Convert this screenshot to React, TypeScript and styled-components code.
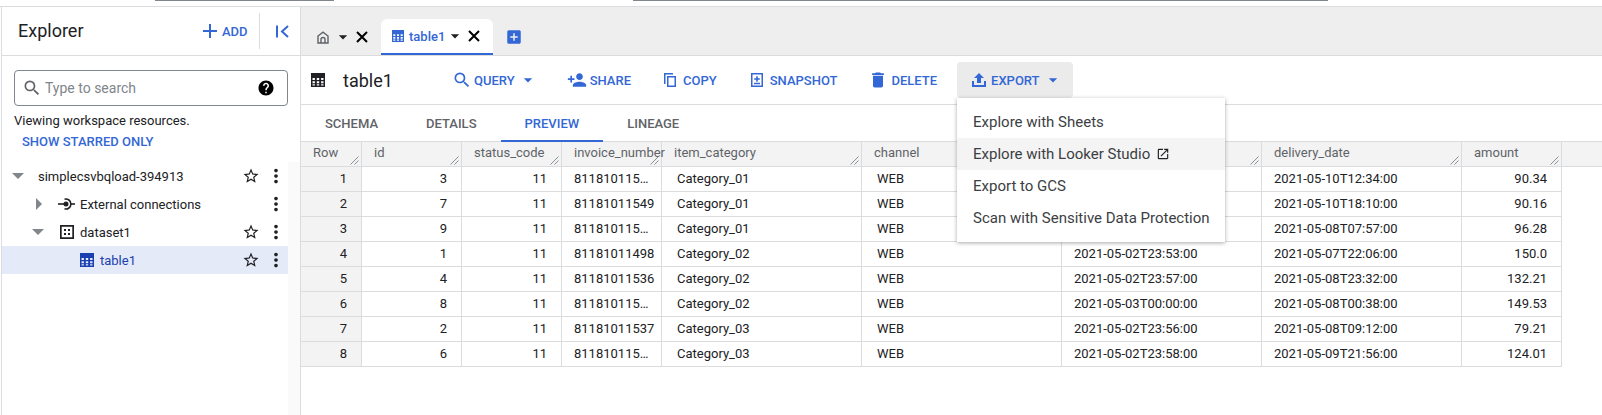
import styled, { createGlobalStyle } from 'styled-components';
import {
  MdAdd,
  MdAddBox,
  MdArrowDropDown,
  MdDelete,
  MdHelp,
  MdMoreVert,
  MdOpenInNew,
  MdPersonAdd,
  MdSearch,
  MdStarBorder,
} from 'react-icons/md';

const BLUE = '#3367d6';
const LINE = '#dadce0';

const GlobalStyle = createGlobalStyle`
  html, body {
    margin: 0;
    height: 100%;
    overflow: hidden;
    background: #fff;
  }
  body {
    font-family: Roboto, "Liberation Sans", sans-serif;
    color: #202124;
  }
  * {
    box-sizing: border-box;
  }
  svg {
    flex: none;
  }
`;

const columns = [
  { name: 'Row', width: 61, right: true },
  { name: 'id', width: 100, right: true },
  { name: 'status_code', width: 100, right: true },
  { name: 'invoice_number', width: 100, right: false },
  { name: 'item_category', width: 200, right: false },
  { name: 'channel', width: 200, right: false },
  { name: '', width: 200, right: false }, // covered by the export menu
  { name: 'delivery_date', width: 200, right: false },
  { name: 'amount', width: 100, right: true },
];

const rows = [
  ['1', '3', '11', '811810115…', 'Category_01', 'WEB', '', '2021-05-10T12:34:00', '90.34'],
  ['2', '7', '11', '81181011549', 'Category_01', 'WEB', '', '2021-05-10T18:10:00', '90.16'],
  ['3', '9', '11', '811810115…', 'Category_01', 'WEB', '', '2021-05-08T07:57:00', '96.28'],
  ['4', '1', '11', '81181011498', 'Category_02', 'WEB', '2021-05-02T23:53:00', '2021-05-07T22:06:00', '150.0'],
  ['5', '4', '11', '81181011536', 'Category_02', 'WEB', '2021-05-02T23:57:00', '2021-05-08T23:32:00', '132.21'],
  ['6', '8', '11', '811810115…', 'Category_02', 'WEB', '2021-05-03T00:00:00', '2021-05-08T00:38:00', '149.53'],
  ['7', '2', '11', '81181011537', 'Category_03', 'WEB', '2021-05-02T23:56:00', '2021-05-08T09:12:00', '79.21'],
  ['8', '6', '11', '811810115…', 'Category_03', 'WEB', '2021-05-02T23:58:00', '2021-05-09T21:56:00', '124.01'],
];

const TableIcon = ({ size = 14, color = 'currentColor' }: { size?: number; color?: string }) => (
  <svg width={size} height={size} viewBox="0 0 14 14" fill={color}>
    <path
      fillRule="evenodd"
      d="M0 0h14v14H0zM1.5 5v2h2.4V5zm4.3 0v2h2.4V5zm4.3 0v2h2.4V5zM1.5 8.2v2h2.4v-2zm4.3 0v2h2.4v-2zm4.3 0v2h2.4v-2zM1.5 11.2v1.4h2.4v-1.4zm4.3 0v1.4h2.4v-1.4zm4.3 0v1.4h2.4v-1.4z"
    />
  </svg>
);

const HomeIcon = () => (
  <svg width="12" height="13" viewBox="0 0 12 13" fill="none" stroke="#5f6368" strokeWidth="1.4">
    <path d="M1 12V5l5-3.8L11 5v7z" />
    <path d="M4 12V8.500a2 2 0 0 1 4 0V12" />
  </svg>
);

const CloseIcon = () => (
  <svg width="18" height="18" viewBox="0 0 18 18" fill="none" stroke="#000" strokeWidth="2">
    <path d="M4 4l10 10M14 4L4 14" />
  </svg>
);

const CollapseIcon = () => (
  <svg width="13" height="13" viewBox="0 0 13 13" fill="none" stroke={BLUE} strokeWidth="2">
    <path d="M1 0.500v12" />
    <path d="M12 1L6 6.500 12 12" />
  </svg>
);

const CopyIcon = () => (
  <svg width="12" height="14" viewBox="0 0 12 14" fill={BLUE}>
    <path d="M0 0h9v1.500H1.500V11H0z" />
    <path fillRule="evenodd" d="M3 3h9v11H3zM4.500 4.500v8h6v-8z" />
  </svg>
);

const SnapshotIcon = () => (
  <svg width="12" height="14" viewBox="0 0 12 14" fill={BLUE}>
    <path
      fillRule="evenodd"
      d="M0 0h12v14H0zM1.500 1.500v11h9v-11zM5.200 3.200h1.600v2h2v1.500h-2v2H5.200v-2h-2V5.200h2zM3 9.800h6v1.400H3z"
    />
  </svg>
);

const ExportIcon = () => (
  <svg width="14" height="14" viewBox="0 0 14 14" fill={BLUE}>
    <path d="M7 0l5 5H9v5H5V5H2z" />
    <path d="M0 8h2v4h10V8h2v6H0z" />
  </svg>
);

const ConnectionIcon = () => (
  <svg width="17" height="14" viewBox="0 0 17 14" fill="none" stroke="#202124" strokeWidth="1.600">
    <path d="M0 7h6" />
    <path d="M6.500 2.200a5 5 0 1 1 0 9.600" />
    <path d="M12.500 7H17" />
    <circle cx="8" cy="7" r="1.700" fill="#202124" />
  </svg>
);

const DatasetIcon = () => (
  <svg width="14" height="14" viewBox="0 0 14 14" fill="#202124">
    <path
      fillRule="evenodd"
      d="M0 0h14v14H0zM1.700 1.700v10.600h10.600V1.700zM4 4h2v2H4zM8 4h2v2H8zM4 8h2v2H4zM8 8h2v2H8z"
    />
  </svg>
);

const ResizeHandle = () => (
  <HandleBox width="9" height="9" viewBox="0 0 9 9" stroke="#80868b" strokeWidth="0.9">
    <path d="M0.500 8.500L8.500 0.500" />
    <path d="M4.500 8.500L8.500 4.500" />
  </HandleBox>
);

const StarAndMenu = ({ star = true }: { star?: boolean }) => (
  <RowActions>
    {star && <MdStarBorder size={18} color="#202124" />}
    <MdMoreVert size={22} color="#202124" />
  </RowActions>
);

export default function App() {
  return (
    <>
      <GlobalStyle />
      <TopStrip>
        <TopBar $left={155} $width={179} />
        <TopBar $left={299} $width={695} />
      </TopStrip>
      <Page>
        <Sidebar>
          <SidebarHeader>
            <SidebarTitle>Explorer</SidebarTitle>
            <AddButton>
              <MdAdd size={24} />
              ADD
            </AddButton>
            <HeaderDivider />
            <CollapseButton>
              <CollapseIcon />
            </CollapseButton>
          </SidebarHeader>
          <SearchBox>
            <MdSearch size={20} color="#5f6368" />
            <SearchText>Type to search</SearchText>
            <MdHelp size={18} color="#000" />
          </SearchBox>
          <ViewingNote>Viewing workspace resources.</ViewingNote>
          <StarredLink>SHOW STARRED ONLY</StarredLink>
          <TreeArea>
            <Tree>
              <TreeRow $indent={6}>
                <Arrow $open />
                <TreeLabel $left={14}>simplecsvbqload-394913</TreeLabel>
                <StarAndMenu />
              </TreeRow>
              <TreeRow $indent={28}>
                <Arrow />
                <TreeIcon $left={16}>
                  <ConnectionIcon />
                </TreeIcon>
                <TreeLabel $left={5}>External connections</TreeLabel>
                <StarAndMenu star={false} />
              </TreeRow>
              <TreeRow $indent={26}>
                <Arrow $open />
                <TreeIcon $left={16}>
                  <DatasetIcon />
                </TreeIcon>
                <TreeLabel $left={6}>dataset1</TreeLabel>
                <StarAndMenu />
              </TreeRow>
              <TreeRow $indent={78} $selected>
                <TreeIcon $left={0}>
                  <TableIcon color="#1a3fb0" />
                </TreeIcon>
                <TreeLabel $left={6} $selected>
                  table1
                </TreeLabel>
                <StarAndMenu />
              </TreeRow>
            </Tree>
            <ScrollTrack />
          </TreeArea>
        </Sidebar>
        <Main>
          <TabStrip>
            <HomeTab>
              <HomeIcon />
              <TabCaret $left={4}>
                <MdArrowDropDown size={20} color="#202124" />
              </TabCaret>
              <CloseIcon />
            </HomeTab>
            <ActiveTab>
              <TableIcon size={12} color={BLUE} />
              <ActiveTabLabel>table1</ActiveTabLabel>
              <TabCaret $left={0}>
                <MdArrowDropDown size={20} color="#202124" />
              </TabCaret>
              <CloseIcon />
            </ActiveTab>
            <NewTab>
              <MdAddBox size={18} color={BLUE} />
            </NewTab>
          </TabStrip>
          <Toolbar>
            <TableIcon color="#202124" />
            <TableTitle>table1</TableTitle>
            <ToolButton>
              <IconSlot $width={14}>
                <MdSearch size={20} />
              </IconSlot>
              QUERY
              <ButtonCaret>
                <MdArrowDropDown size={20} />
              </ButtonCaret>
            </ToolButton>
            <ToolButton $after={1}>
              <IconSlot $width={16}>
                <MdPersonAdd size={20} />
              </IconSlot>
              SHARE
            </ToolButton>
            <ToolButton $after={2}>
              <IconSlot $width={12} $gap={7}>
                <CopyIcon />
              </IconSlot>
              COPY
            </ToolButton>
            <ToolButton>
              <IconSlot $width={12} $gap={7}>
                <SnapshotIcon />
              </IconSlot>
              SNAPSHOT
            </ToolButton>
            <ToolButton>
              <IconSlot $width={12} $gap={7}>
                <MdDelete size={20} />
              </IconSlot>
              DELETE
            </ToolButton>
            <ExportWrap>
              <ToolButton $active $after={0}>
                <IconSlot $width={14}>
                  <ExportIcon />
                </IconSlot>
                EXPORT
                <ButtonCaret>
                  <MdArrowDropDown size={20} />
                </ButtonCaret>
              </ToolButton>
              <ExportMenu>
                <MenuItem>Explore with Sheets</MenuItem>
                <MenuItem $hover>
                  Explore with Looker Studio
                  <MdOpenInNew size={14} color="#202124" />
                </MenuItem>
                <MenuItem>Export to GCS</MenuItem>
                <MenuItem>Scan with Sensitive Data Protection</MenuItem>
              </ExportMenu>
            </ExportWrap>
          </Toolbar>
          <ResultTabs>
            <ResultTab>SCHEMA</ResultTab>
            <ResultTab>DETAILS</ResultTab>
            <ResultTab $active>PREVIEW</ResultTab>
            <ResultTab>LINEAGE</ResultTab>
          </ResultTabs>
          <HeaderRow>
            {columns.map((col) => (
              <HeaderCell key={col.name || 'covered'} $width={col.width}>
                {col.name}
                <ResizeHandle />
              </HeaderCell>
            ))}
          </HeaderRow>
          {rows.map((row) => (
            <DataRow key={row[0]}>
              {row.map((value, i) => (
                <DataCell
                  key={i}
                  $width={columns[i].width}
                  $right={columns[i].right}
                  $rowHead={i === 0}
                  $tight={i === 3 || i > 5}
                >
                  {value}
                </DataCell>
              ))}
            </DataRow>
          ))}
        </Main>
      </Page>
    </>
  );
}

const TopStrip = styled.div`
  display: flex;
  align-items: flex-start;
  height: 7px;
  border-bottom: 1px solid ${LINE};
`;

const TopBar = styled.div<{ $left: number; $width: number }>`
  margin-left: ${(p) => p.$left}px;
  width: ${(p) => p.$width}px;
  height: 1px;
  background: #80868b;
`;

const Page = styled.div`
  display: flex;
  height: 408px;
`;

const Sidebar = styled.aside`
  display: flex;
  flex-direction: column;
  flex: none;
  width: 300px;
  margin-left: 1px;
  border-left: 1px solid ${LINE};
  border-right: 1px solid ${LINE};
`;

const SidebarHeader = styled.div`
  display: flex;
  align-items: center;
  flex: none;
  height: 49px;
  padding-left: 16px;
  border-bottom: 1px solid ${LINE};
`;

const SidebarTitle = styled.div`
  width: 180px;
  padding-bottom: 2px;
  font-size: 18px;
  color: #202124;
`;

const AddButton = styled.div`
  display: flex;
  align-items: center;
  width: 61px;
  font-size: 13px;
  font-weight: 500;
  color: ${BLUE};
`;

const HeaderDivider = styled.div`
  width: 1px;
  height: 36px;
  background: ${LINE};
`;

const CollapseButton = styled.div`
  display: flex;
  margin-left: 16px;
`;

const SearchBox = styled.div`
  display: flex;
  align-items: center;
  flex: none;
  width: 274px;
  height: 36px;
  margin: 14px 0 0 12px;
  padding: 0 12px 0 7px;
  border: 1px solid #80868b;
  border-radius: 4px;
`;

const SearchText = styled.div`
  flex: 1;
  margin-left: 3px;
  font-size: 14px;
  color: #80868b;
`;

const ViewingNote = styled.div`
  margin: 6px 0 0 12px;
  font-size: 13px;
  line-height: 18px;
  color: #202124;
`;

const StarredLink = styled.div`
  margin: 3px 0 0 20px;
  font-size: 13px;
  font-weight: 500;
  line-height: 18px;
  color: ${BLUE};
`;

const TreeArea = styled.div`
  display: flex;
  flex: 1;
  margin-top: 11px;
`;

const Tree = styled.div`
  width: 286px;
`;

const ScrollTrack = styled.div`
  flex: 1;
  background: #fafafa;
`;

const TreeRow = styled.div<{ $indent: number; $selected?: boolean }>`
  display: flex;
  align-items: center;
  height: 28px;
  padding-left: ${(p) => p.$indent}px;
  background: ${(p) => (p.$selected ? '#e5eaf8' : 'transparent')};
`;

const Arrow = styled.span<{ $open?: boolean }>`
  flex: none;
  width: 0;
  height: 0;
  ${(p) =>
    p.$open
      ? `
    margin-left: 4px;
    border-left: 6px solid transparent;
    border-right: 6px solid transparent;
    border-top: 6px solid #80868b;
  `
      : `
    margin-left: 6px;
    border-top: 6px solid transparent;
    border-bottom: 6px solid transparent;
    border-left: 6px solid #80868b;
  `}
`;

const TreeIcon = styled.span<{ $left: number }>`
  display: flex;
  flex: none;
  margin-left: ${(p) => p.$left}px;
`;

const TreeLabel = styled.span<{ $left: number; $selected?: boolean }>`
  margin-left: ${(p) => p.$left}px;
  font-size: 13px;
  color: ${(p) => (p.$selected ? '#1a3fb0' : '#202124')};
`;

const RowActions = styled.div`
  display: flex;
  align-items: center;
  justify-content: flex-end;
  gap: 5px;
  margin-left: auto;
  padding-right: 1px;
`;

const Main = styled.main`
  flex: 1;
  min-width: 0;
`;

const TabStrip = styled.div`
  display: flex;
  align-items: flex-end;
  height: 49px;
  background: #eee;
  border-bottom: 1px solid ${LINE};
`;

const HomeTab = styled.div`
  display: flex;
  align-items: center;
  width: 80px;
  height: 36px;
  padding-left: 16px;
`;

const TabCaret = styled.span<{ $left: number }>`
  display: flex;
  margin-left: ${(p) => p.$left}px;
`;

const ActiveTab = styled.div`
  display: flex;
  align-items: center;
  width: 112px;
  height: 36px;
  padding-left: 11px;
  background: #fff;
  border-radius: 6px 6px 0 0;
  border-bottom: 2px solid ${BLUE};
`;

const ActiveTabLabel = styled.span`
  margin-left: 5px;
  font-size: 13px;
  font-weight: 500;
  color: ${BLUE};
`;

const NewTab = styled.div`
  display: flex;
  align-items: center;
  height: 36px;
  margin-left: 12px;
`;

const Toolbar = styled.div`
  display: flex;
  align-items: center;
  height: 49px;
  padding-left: 10px;
  border-bottom: 1px solid ${LINE};
`;

const TableTitle = styled.div`
  width: 96px;
  margin-left: 18px;
  font-size: 18px;
  color: #202124;
`;

const ToolButton = styled.div<{ $active?: boolean; $after?: number }>`
  display: flex;
  align-items: center;
  height: 36px;
  margin-right: ${(p) => p.$after ?? 3}px;
  padding: ${(p) => (p.$active ? '0 14px 0 15px' : '0 16px')};
  font-size: 13px;
  font-weight: 500;
  color: ${BLUE};
  border-radius: 4px;
  background: ${(p) => (p.$active ? '#ebebeb' : 'transparent')};
`;

const IconSlot = styled.span<{ $width: number; $gap?: number }>`
  display: flex;
  justify-content: center;
  flex: none;
  width: ${(p) => p.$width}px;
  margin-right: ${(p) => p.$gap ?? 5}px;
`;

const ButtonCaret = styled.span`
  display: flex;
  margin: 0 -4px 0 3px;
`;

const ExportWrap = styled.div`
  position: relative;
  margin-left: 1px;
`;

const ExportMenu = styled.div`
  position: absolute;
  top: 36px;
  left: 0;
  z-index: 5;
  width: 268px;
  padding: 8px 0;
  background: #fff;
  box-shadow: 0 1px 4px rgba(60, 64, 67, 0.45);
`;

const MenuItem = styled.div<{ $hover?: boolean }>`
  display: flex;
  align-items: center;
  gap: 6px;
  height: 32px;
  padding-left: 16px;
  font-size: 15px;
  color: #3c4043;
  background: ${(p) => (p.$hover ? '#f4f4f4' : 'transparent')};
`;

const ResultTabs = styled.div`
  display: flex;
  height: 37px;
  border-bottom: 1px solid ${LINE};
`;

const ResultTab = styled.div<{ $active?: boolean }>`
  display: flex;
  align-items: center;
  padding: 0 24px;
  font-size: 13px;
  font-weight: 500;
  color: ${(p) => (p.$active ? BLUE : '#5f6368')};
  box-shadow: ${(p) => (p.$active ? `inset 0 -2px 0 ${BLUE}` : 'none')};
  margin-bottom: -1px;
`;

const HeaderRow = styled.div`
  display: flex;
  height: 25px;
  background: #f3f3f3;
  border-bottom: 1px solid ${LINE};
`;

const HeaderCell = styled.div<{ $width: number }>`
  position: relative;
  flex: none;
  width: ${(p) => p.$width}px;
  padding: 3px 0 0 12px;
  font-size: 13px;
  line-height: 16px;
  color: #5f6368;
  white-space: nowrap;
  border-right: 1px solid ${LINE};
`;

const HandleBox = styled.svg`
  position: absolute;
  right: 2px;
  bottom: 1px;
`;

const DataRow = styled.div`
  display: flex;
  height: 25px;
`;

const DataCell = styled.div<{ $width: number; $right: boolean; $rowHead: boolean; $tight: boolean }>`
  flex: none;
  width: ${(p) => p.$width}px;
  padding: 0 ${(p) => (p.$right ? '14px' : '0')} 0 ${(p) => (p.$tight ? '12px' : p.$right ? '0' : '15px')};
  font-size: 13px;
  line-height: 24px;
  text-align: ${(p) => (p.$right ? 'right' : 'left')};
  color: #202124;
  white-space: nowrap;
  background: ${(p) => (p.$rowHead ? '#f3f3f3' : '#fff')};
  border-right: 1px solid ${LINE};
  border-bottom: 1px solid ${LINE};
`;
